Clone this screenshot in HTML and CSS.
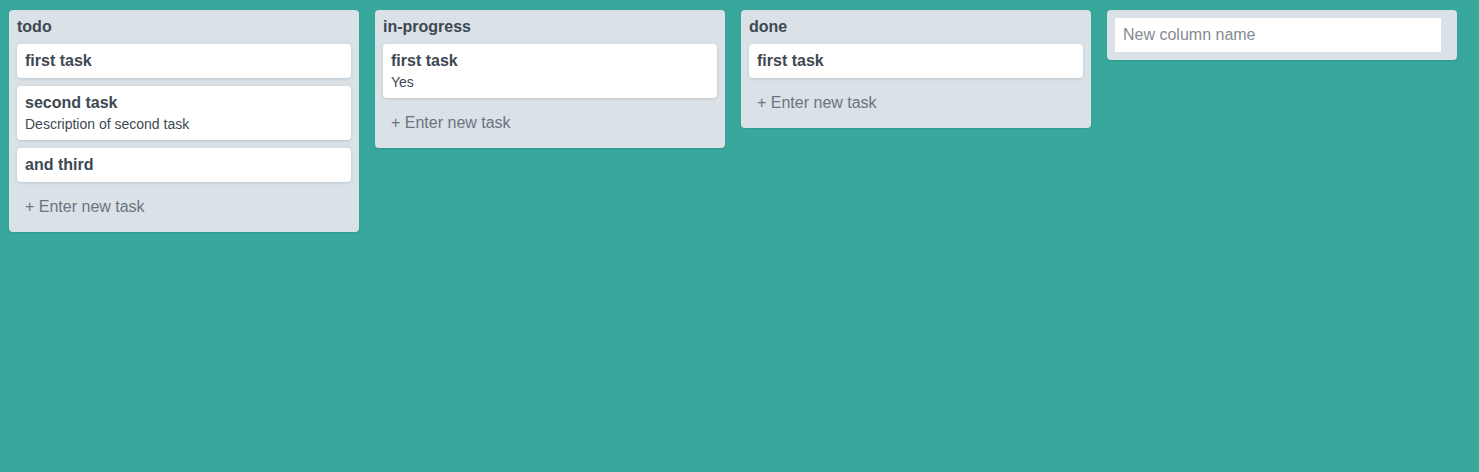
FILE: index.html
```html
<!DOCTYPE html>
<html>
<head>
<meta charset="utf-8">
<link rel="stylesheet" href="styles.css">
</head>
<body>
<div class="board">
  <div class="column">
    <div class="column-title">todo</div>
    <div class="task"><div class="task-title">first task</div></div>
    <div class="task"><div class="task-title">second task</div><div class="task-desc">Description of second task</div></div>
    <div class="task"><div class="task-title">and third</div></div>
    <div class="add-task">+ Enter new task</div>
  </div>
  <div class="column">
    <div class="column-title">in-progress</div>
    <div class="task"><div class="task-title">first task</div><div class="task-desc">Yes</div></div>
    <div class="add-task">+ Enter new task</div>
  </div>
  <div class="column">
    <div class="column-title">done</div>
    <div class="task"><div class="task-title">first task</div></div>
    <div class="add-task">+ Enter new task</div>
  </div>
  <div class="column">
    <input class="new-column" type="text" placeholder="New column name">
  </div>
</div>
</body>
</html>
```
FILE: styles.css
```css
html, body {
  margin: 0;
  height: 100%;
}
body {
  background: #38a89d;
  font-family: "Liberation Sans", Arial, sans-serif;
  color: #3d4852;
}
.board {
  display: flex;
  align-items: flex-start;
  gap: 16px;
  padding: 10px 9px;
}
.column {
  width: 350px;
  flex: none;
  box-sizing: border-box;
  background: #dae1e7;
  border-radius: 4px;
  padding: 8px;
  display: flex;
  flex-direction: column;
  gap: 8px;
  box-shadow: 0 1px 2px rgba(0,0,0,0.1);
}
.column-title {
  font-weight: bold;
  font-size: 16px;
  line-height: 18px;
}
.task {
  background: #fff;
  border-radius: 4px;
  padding: 8px;
  box-shadow: 0 1px 3px rgba(0,0,0,0.12);
}
.task-title {
  font-weight: bold;
  font-size: 16px;
  line-height: 18px;
}
.task-desc {
  font-size: 14px;
  line-height: 16px;
  margin-top: 4px;
}
.add-task {
  font-size: 16px;
  line-height: 18px;
  padding: 8px;
  color: #6b7480;
}
.new-column {
  width: 326px;
  height: 34px;
  box-sizing: border-box;
  border: none;
  padding: 8px;
  font-family: "Liberation Sans", Arial, sans-serif;
  font-size: 16px;
  color: #3d4852;
  outline: none;
}
.new-column::placeholder {
  color: #858b92;
}
```
